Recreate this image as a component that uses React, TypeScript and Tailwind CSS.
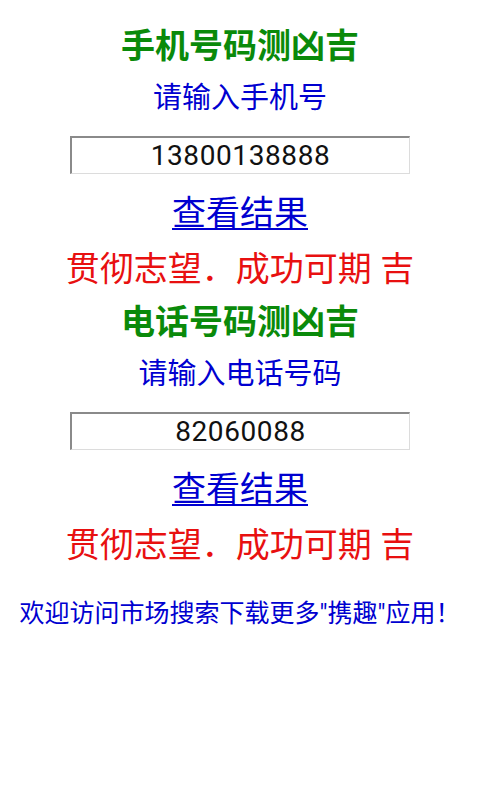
import React from "react";

const cjk = "font-['Roboto','Noto_Sans_CJK_SC',sans-serif]";

function Section({ title, prompt, value }: { title: string; prompt: string; value: string }) {
  return (
    <div className="flex flex-col items-center">
      <h1 className={`h-[40px] text-[34px] leading-[40px] font-bold text-[#0a8a0a] ${cjk}`}>{title}</h1>
      <p className={`mt-[14px] h-[36px] text-[29px] leading-[36px] text-[#0000d0] ${cjk}`}>{prompt}</p>
      <div className="mt-[20px] h-[38px] w-[340px] border-t-2 border-l-2 border-b border-r border-t-[#8a8a8a] border-l-[#8a8a8a] border-b-[#dcdcdc] border-r-[#dcdcdc] bg-white flex items-center justify-center">
        <span className="text-[28px] leading-[34px] tracking-[0.6px] text-[#111] font-['Roboto',sans-serif]">{value}</span>
      </div>
      <a href="#" className={`mt-[19px] h-[40px] text-[34px] leading-[40px] text-[#0000d0] underline underline-offset-[3px] decoration-[2px] ${cjk}`}>
        查看结果
      </a>
      <p className={`mt-[16px] h-[40px] text-[34px] leading-[40px] text-[#e81010] whitespace-pre ${cjk}`}>
        贯彻志望．成功可期 吉
      </p>
    </div>
  );
}

export default function App() {
  return (
    <main className="min-h-[800px] w-[480px] bg-white pt-[26px]">
      <Section title="手机号码测凶吉" prompt="请输入手机号" value="13800138888" />
      <div className="mt-[13px]">
        <Section title="电话号码测凶吉" prompt="请输入电话号码" value="82060088" />
      </div>
      <p className={`mt-[34px] text-center text-[25px] leading-[30px] text-[#0000d0] ${cjk}`}>
        欢迎访问市场搜索下载更多"携趣"应用！
      </p>
    </main>
  );
}
